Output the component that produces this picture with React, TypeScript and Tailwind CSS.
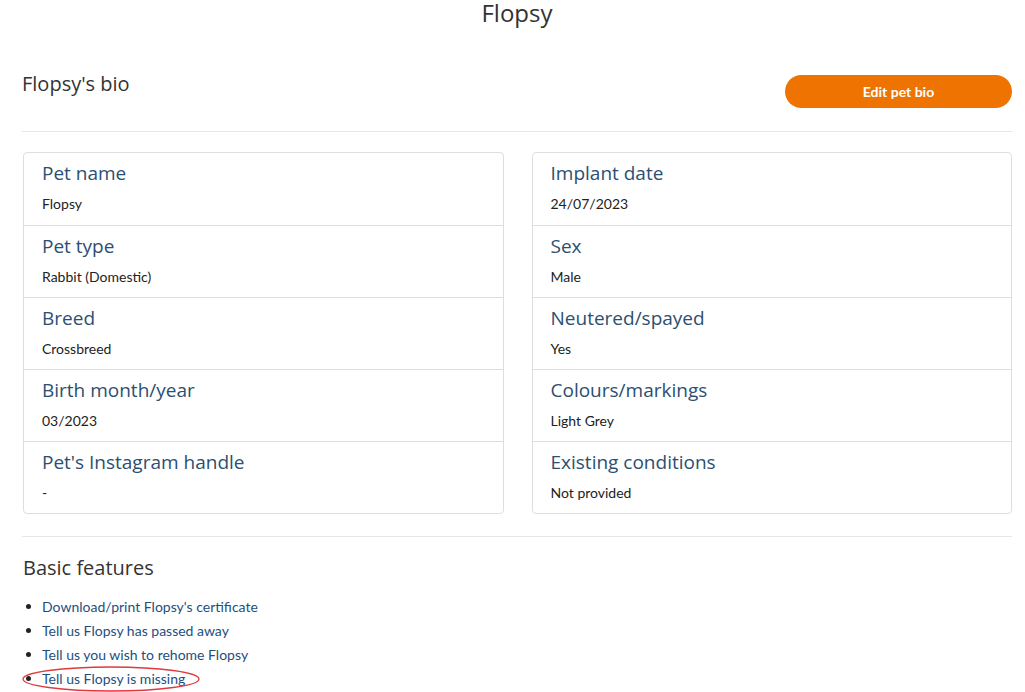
import React from "react";

const heading = { fontFamily: "'Open Sans', 'Noto Sans', sans-serif" };
const body = { fontFamily: "Lato, 'Open Sans', sans-serif" };

const left = [
  ["Pet name", "Flopsy"],
  ["Pet type", "Rabbit (Domestic)"],
  ["Breed", "Crossbreed"],
  ["Birth month/year", "03/2023"],
  ["Pet's Instagram handle", "-"],
];
const right = [
  ["Implant date", "24/07/2023"],
  ["Sex", "Male"],
  ["Neutered/spayed", "Yes"],
  ["Colours/markings", "Light Grey"],
  ["Existing conditions", "Not provided"],
];

function Card({ rows }: { rows: string[][] }) {
  return (
    <div className="border border-[#dedede] rounded-[4px] bg-white">
      {rows.map(([l, v], i) => (
        <div
          key={l}
          className={`h-[72px] px-[18px] pt-[8px] ${i > 0 ? "border-t border-[#dedede]" : ""}`}
        >
          <div className="text-[19px] leading-[24px] text-[#2c4f72]" style={heading}>
            {l}
          </div>
          <div className="mt-[10px] text-[14px] leading-[18px] text-[#222]" style={body}>
            {v}
          </div>
        </div>
      ))}
    </div>
  );
}

export default function App() {
  const links = [
    "Download/print Flopsy's certificate",
    "Tell us Flopsy has passed away",
    "Tell us you wish to rehome Flopsy",
    "Tell us Flopsy is missing",
  ];
  return (
    <div className="w-[1025px] h-[692px] overflow-hidden bg-white">
      <div className="ml-[22px] w-[990px]">
        <h1 className="text-center text-[24px] leading-[26px] text-[#333]" style={heading}>
          Flopsy
        </h1>
        <div className="mt-[46px] flex items-start justify-between">
          <h2 className="text-[20px] leading-[24px] text-[#333]" style={heading}>
            Flopsy's bio
          </h2>
          <button
            className="mt-[3px] h-[33px] w-[227px] rounded-full bg-[#ef7300] text-white text-[14px] font-bold"
            style={body}
          >
            Edit pet bio
          </button>
        </div>
        <div className="mt-[23px] border-t border-[#e6e6e6]" />
        <div className="mt-[20px] ml-[1px] grid grid-cols-2 gap-[28px]">
          <Card rows={left} />
          <Card rows={right} />
        </div>
        <div className="mt-[22px] border-t border-[#e6e6e6]" />
        <h3 className="mt-[19px] ml-[1px] text-[20px] leading-[24px] text-[#333]" style={heading}>
          Basic features
        </h3>
        <ul className="mt-[14px] ml-[1px]" style={body}>
          {links.map((t, i) => (
            <li key={t} className="relative flex items-center h-[24px] text-[14px] text-[#1d4f7e]">
              <span className="w-[19px] flex items-center">
                <span className="ml-[3px] w-[5px] h-[5px] rounded-full bg-[#222]" />
              </span>
              <span>{t}</span>
              {i === 3 && (
                <svg
                  className="absolute left-[-2px] top-[-1px]"
                  width="182"
                  height="28"
                  viewBox="0 0 182 28"
                >
                  <ellipse cx="90" cy="14" rx="88" ry="12" fill="none" stroke="#e0393e" strokeWidth="1.3" />
                </svg>
              )}
            </li>
          ))}
        </ul>
      </div>
    </div>
  );
}
